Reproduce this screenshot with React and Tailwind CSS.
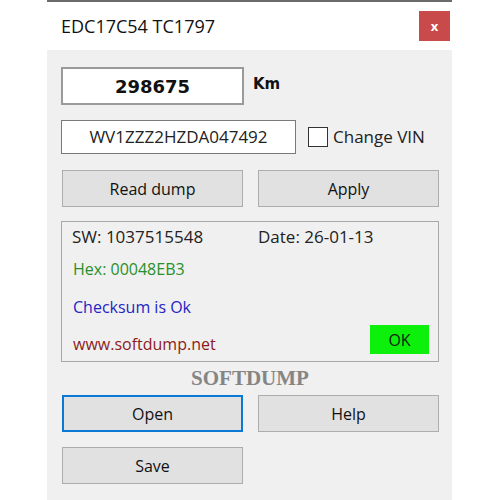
import { useState } from "react";

const btn =
  "h-[37px] w-[181px] bg-[#e1e1e1] border border-[#adadad] text-[16px] text-[#111] flex items-center justify-center";

export default function App() {
  const [changeVin, setChangeVin] = useState(false);

  return (
    <div className="w-[500px] h-[500px] bg-white overflow-hidden" style={{ fontFamily: '"Open Sans", "Noto Sans", sans-serif' }}>
      <div className="ml-[47px] w-[405px] h-[500px] flex flex-col border-t-2 border-[#6b6b6b]">
        {/* title bar */}
        <div className="h-[48px] bg-white flex items-center justify-between pl-[14px] pr-[2px]">
          <span className="text-[18px] text-[#111]">EDC17C54 TC1797</span>
          <button className="w-[31px] h-[30px] bg-[#c84a4a] text-white text-[13px] font-bold flex items-center justify-center leading-none">
            x
          </button>
        </div>

        {/* client area */}
        <div className="flex-1 bg-[#f0f0f0] pl-[14px] flex flex-col">
          <div className="mt-[17px] flex items-center">
            <div
              className="w-[183px] h-[38px] bg-white border-2 border-[#9a9a9a] flex items-center justify-center text-[18px] font-bold text-[#111]"
              style={{ fontFamily: '"DejaVu Sans", sans-serif' }}
            >
              298675
            </div>
            <span
              className="ml-[9px] text-[15px] font-bold text-[#111] -mt-[4px]"
              style={{ fontFamily: '"DejaVu Sans", sans-serif' }}
            >
              Km
            </span>
          </div>

          <div className="mt-[15px] flex items-center">
            <div className="w-[235px] h-[34px] bg-white border border-[#7a7a7a] flex items-center justify-center text-[17px] text-[#222]">
              WV1ZZZ2HZDA047492
            </div>
            <label className="ml-[12px] flex items-center cursor-pointer">
              <span
                onClick={() => setChangeVin(!changeVin)}
                className="w-[20px] h-[20px] bg-white border border-[#333] flex items-center justify-center text-[13px]"
              >
                {changeVin ? "✓" : ""}
              </span>
              <span className="ml-[5px] text-[17px] text-[#222]">Change VIN</span>
            </label>
          </div>

          <div className="mt-[16px] flex gap-[15px] pl-[1px]">
            <button className={btn}>Read dump</button>
            <button className={btn}>Apply</button>
          </div>

          {/* dump info */}
          <div className="mt-[14px] w-[378px] h-[141px] border border-[#a8a8a8] flex flex-col text-[16px]">
            <div className="h-[31px] flex items-center pl-[10px] text-[17px] text-[#222]">
              <span className="w-[186px]">SW: 1037515548</span>
              <span>Date: 26-01-13</span>
            </div>
            <div className="h-[39px] flex items-center pl-[11px] text-[#2a8f2a]">Hex: 00048EB3</div>
            <div className="flex-1 flex justify-between">
              <div className="flex flex-col pl-[11px]">
                <div className="h-[40px] flex items-center text-[#2424c4]">Checksum is Ok</div>
                <div className="h-[34px] flex items-center text-[#8b1c1c]">www.softdump.net</div>
              </div>
              <div className="self-end mb-[7px] mr-[9px] w-[59px] h-[29px] bg-[#0cf00c] flex items-center justify-center text-[16px] text-[#112211]">
                OK
              </div>
            </div>
          </div>

          <div
            className="h-[33px] w-[378px] flex items-center justify-center text-[21px] font-bold text-[#858585]"
            style={{ fontFamily: '"Liberation Serif", serif' }}
          >
            SOFTDUMP
          </div>

          <div className="flex gap-[15px] pl-[1px]">
            <button className={btn.replace("border border-[#adadad]", "border-2 border-[#0a78d4]")}>Open</button>
            <button className={btn}>Help</button>
          </div>
          <div className="mt-[15px] pl-[1px]">
            <button className={btn}>Save</button>
          </div>
        </div>
      </div>
    </div>
  );
}
